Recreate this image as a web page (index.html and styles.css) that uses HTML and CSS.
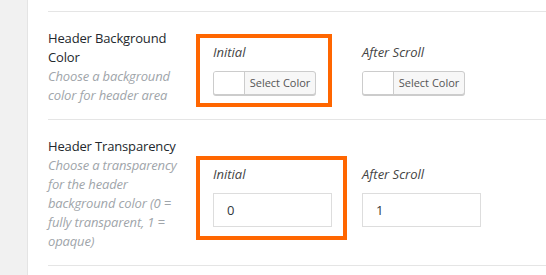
FILE: index.html
```html
<!DOCTYPE html>
<html>
<head>
  <title>Header Options</title>
  <link rel="stylesheet" href="styles.css">
</head>
<body>
  <div class="sidebar"></div>
  <div class="panel">
    <div class="option-row">
      <div class="option-info">
        <div class="option-title">Header Background Color</div>
        <div class="option-desc">Choose a background color for header area</div>
      </div>
      <div class="option-fields">
        <div class="field highlight tight">
          <div class="field-label">Initial</div>
          <button type="button" class="color-picker"><span class="swatch"></span><span class="picker-text">Select Color</span></button>
        </div>
        <div class="field">
          <div class="field-label">After Scroll</div>
          <button type="button" class="color-picker"><span class="swatch"></span><span class="picker-text">Select Color</span></button>
        </div>
      </div>
    </div>

    <div class="option-row">
      <div class="option-info">
        <div class="option-title">Header Transparency</div>
        <div class="option-desc">Choose a transparency for the header background color (0 = fully transparent, 1 = opaque)</div>
      </div>
      <div class="option-fields">
        <div class="field highlight">
          <div class="field-label">Initial</div>
          <input type="text" class="num-input" value="0">
        </div>
        <div class="field">
          <div class="field-label">After Scroll</div>
          <input type="text" class="num-input" value="1">
        </div>
      </div>
    </div>
    <div class="option-end"></div>
  </div>
</body>
</html>
```

FILE: styles.css
```css
body { margin: 0; background: #f1f1f1; font-family: "Open Sans", "Noto Sans", Arial, sans-serif; font-size: 13px; line-height: 19px; color: #23282d; display: flex; min-height: 275px; }
.sidebar { width: 27px; border-right: 1px solid #e4e4e4; flex-shrink: 0; }
.panel { flex: 1; background: #fff; padding: 11px 0 0 20px; }
.option-row { display: flex; align-items: center; border-top: 1px solid #e5e5e5; padding: 17px 0 14px; }
.option-end { border-top: 1px solid #e5e5e5; }
.option-info { width: 145px; margin-right: 20px; flex-shrink: 0; letter-spacing: -0.15px; }
.option-title { color: #23282d; }
.option-desc { font-style: italic; color: #a0a5aa; }
.option-fields { display: flex; gap: 30px; margin-top: 4px; }
.field { position: relative; width: 119px; }
.field-label { font-style: italic; color: #444; margin-bottom: 9px; }
.highlight::before { content: ""; position: absolute; top: -9px; left: -17px; right: -15px; bottom: -13px; border: 4px solid #ff6600; }
.highlight.tight::before { right: 0; bottom: -12px; }
.color-picker { display: flex; width: 103px; height: 24px; padding: 0; border: 1px solid #ccc; border-radius: 3px; background: #f7f7f7; box-shadow: 0 1px 0 #ccc; font-family: inherit; cursor: pointer; overflow: hidden; }
.swatch { width: 30px; height: 100%; background: #fff; border-right: 1px solid #ccc; }
.picker-text { flex: 1; font-size: 11px; line-height: 22px; color: #555; text-align: center; }
.num-input { display: block; width: 119px; height: 34px; box-sizing: border-box; border: 1px solid #ddd; padding: 0 13px; font-family: inherit; font-size: 13px; color: #32373c; }
```
